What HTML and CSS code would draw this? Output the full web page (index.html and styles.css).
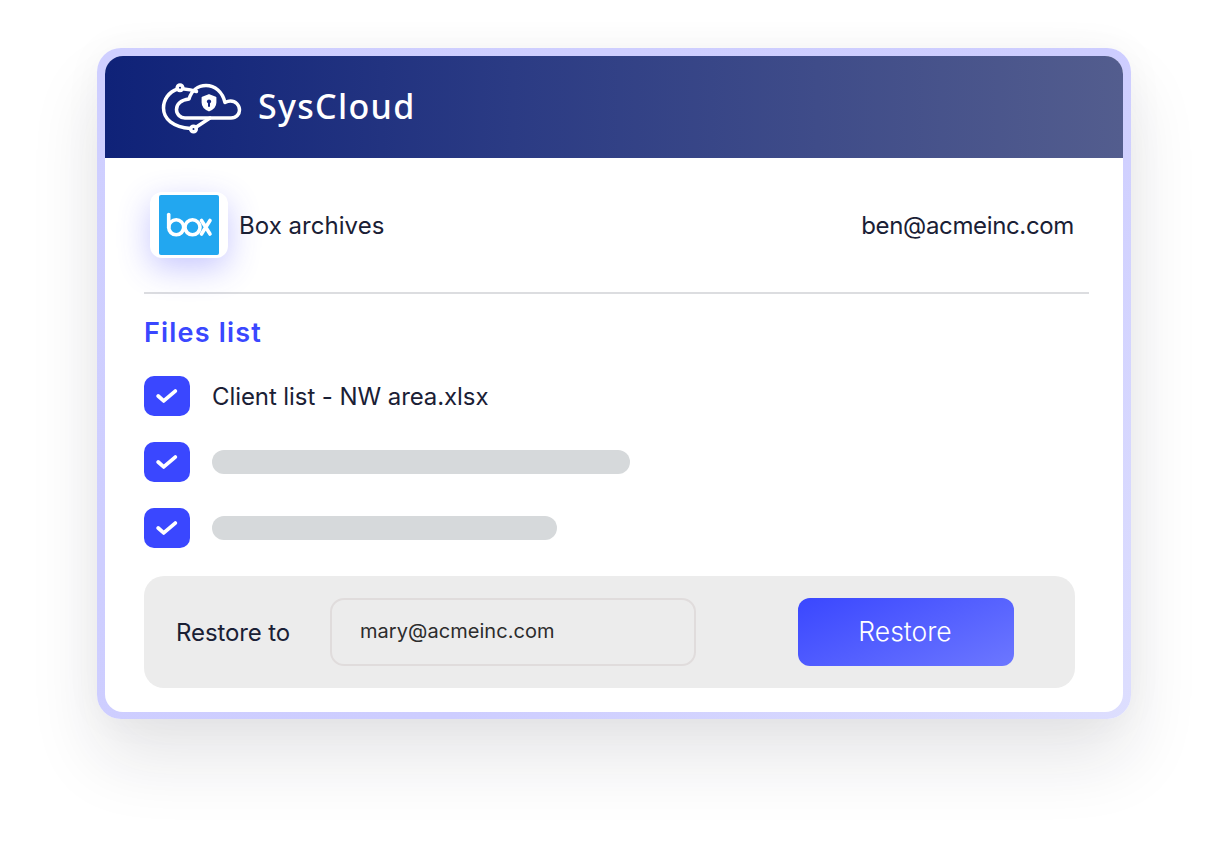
FILE: index.html
```html
<!DOCTYPE html>
<html lang="en">

<head>
  <meta charset="UTF-8">
  <meta name="viewport" content="width=device-width, initial-scale=1.0">
  <title>SysCloud Box archives</title>
  <link rel="stylesheet" href="styles.css">
</head>

<body>

  <div class="card">
    <div class="card-inner">
      <header class="header">
        <svg class="logo" viewBox="0 0 95 65" fill="none" stroke="#fff" stroke-width="3.500" stroke-linecap="round" stroke-linejoin="round">
          <circle cx="25" cy="12.7" r="2.800" />
          <path d="M22.500 14C13.500 17 8.500 25 8.500 33C8.500 44 18 52 35.500 53.500" />
          <circle cx="38.500" cy="54" r="2.800" />
          <path d="M41 52.300L55 43" />
          <path d="M29 14C33 14.300 37 15 41.500 16.500" />
          <path d="M34 24C26 25 21.500 29 21.500 34.500C21.500 39.500 25.500 43 30 43H76C81.500 43 84.500 39 84.500 35C84.500 30 80.500 26 75.500 26C73.500 26 72 26.500 70 27.500C67.500 17 60 10.500 51 10.500C43 10.500 36.500 15.500 34 24Z" />
          <path d="M54 20L60.500 22.500V27.500C60.500 31.500 57.500 34 54 35.500C50.500 34 47.500 31.500 47.500 27.500V22.500Z" stroke-width="1.800" fill="#fff" />
          <circle cx="54" cy="26.500" r="2.100" fill="#152680" stroke="none" />
          <path d="M54 27V31" stroke="#152680" stroke-width="2" />
        </svg>
        <span class="brand">SysCloud</span>
      </header>

      <main class="content">
        <div class="account">
          <div class="account-left">
            <div class="tile">
              <svg class="box-logo" viewBox="0 0 60 60" fill="none" stroke="#fff" stroke-width="3.600" stroke-linecap="round">
                <path d="M9.700 19.500V32.300" />
                <circle cx="17.200" cy="32.300" r="7.500" />
                <circle cx="33.500" cy="32.300" r="7.500" />
                <path d="M42.500 25.500L51 39M51 25.500L42.500 39" />
              </svg>
            </div>
            <span class="account-name">Box archives</span>
          </div>
          <span class="account-email">ben@acmeinc.com</span>
        </div>

        <h2 class="files-title">Files list</h2>

        <ul class="files">
          <li class="file">
            <span class="check">
              <svg viewBox="0 0 20 16" fill="none" stroke="#fff" stroke-width="3.400" stroke-linecap="round" stroke-linejoin="round"><path d="M2 8L7 12.500L17.500 3.500" /></svg>
            </span>
            <span class="file-name">Client list - NW area.xlsx</span>
          </li>
          <li class="file">
            <span class="check">
              <svg viewBox="0 0 20 16" fill="none" stroke="#fff" stroke-width="3.400" stroke-linecap="round" stroke-linejoin="round"><path d="M2 8L7 12.500L17.500 3.500" /></svg>
            </span>
            <span class="bar bar-long"></span>
          </li>
          <li class="file">
            <span class="check">
              <svg viewBox="0 0 20 16" fill="none" stroke="#fff" stroke-width="3.400" stroke-linecap="round" stroke-linejoin="round"><path d="M2 8L7 12.500L17.500 3.500" /></svg>
            </span>
            <span class="bar bar-short"></span>
          </li>
        </ul>

        <form class="restore">
          <label class="restore-label" for="target">Restore to</label>
          <input class="restore-input" id="target" type="text" value="mary@acmeinc.com">
          <button class="restore-btn" type="button">Restore</button>
        </form>
      </main>
    </div>
  </div>

</body>

</html>
```

FILE: styles.css
```css
* {
  box-sizing: border-box;
}

body {
  margin: 0;
  height: 864px;
  overflow: hidden;
  padding: 48px 0 0 97px;
  background: #fff;
  font-family: Inter, "Liberation Sans", sans-serif;
  font-size: 24px;
  font-weight: 400;
  color: #1a2035;
}

.card {
  width: 1034px;
  height: 671px;
  padding: 8px 8px 7px;
  border-radius: 24px;
  background: linear-gradient(135deg, #cfcfff 0%, #cdcdff 60%, #dddefe 100%);
  box-shadow: 0 40px 70px rgba(30, 30, 50, 0.11), 0 0 40px rgba(30, 30, 50, 0.04);
}

.card-inner {
  height: 100%;
  background: #fff;
  border-radius: 18px;
  overflow: hidden;
}

.header {
  height: 102px;
  display: flex;
  align-items: center;
  padding: 0 0 2px 50px;
  background: linear-gradient(90deg, #0f2278 0%, #2b3b84 40%, #535d8e 100%);
}

.logo {
  width: 95px;
  height: 65px;
  flex: none;
  margin-top: 2px;
}

.brand {
  margin-left: 8px;
  font-family: "Noto Sans", sans-serif;
  font-size: 34px;
  font-weight: 500;
  letter-spacing: 1.3px;
  color: #fff;
}

.content {
  padding: 0 34px 0 39px;
}

.account {
  height: 136px;
  display: flex;
  align-items: center;
  justify-content: space-between;
  padding: 0 15px 0 6px;
  border-bottom: 2px solid #dcdde0;
}

.account-left {
  display: flex;
  align-items: center;
  gap: 11px;
}

.account-name {
  padding-top: 1px;
  letter-spacing: 0.04px;
}

.account-email {
  padding-top: 1px;
  letter-spacing: -0.35px;
}

.tile {
  width: 78px;
  height: 66px;
  display: flex;
  align-items: center;
  justify-content: center;
  background: #fff;
  border-radius: 12px;
  box-shadow: 0 10px 32px rgba(70, 70, 255, 0.3);
}

.box-logo {
  width: 60px;
  height: 60px;
  background: #22a7f0;
  border-radius: 2px;
}

.files-title {
  margin: 22px 0 26px;
  font-size: 27px;
  line-height: 34px;
  font-weight: 600;
  letter-spacing: 1.2px;
  color: #3a47ff;
}

.files {
  list-style: none;
  margin: 0;
  padding: 0;
  display: flex;
  flex-direction: column;
  gap: 26px;
}

.file {
  display: flex;
  align-items: center;
  gap: 22px;
  height: 40px;
}

.file-name {
  letter-spacing: -0.08px;
}

.check {
  width: 46px;
  height: 40px;
  display: flex;
  align-items: center;
  justify-content: center;
  background: #3a47ff;
  border-radius: 10px;
}

.check svg {
  width: 22px;
  height: 18px;
}

.bar {
  height: 24px;
  border-radius: 12px;
  background: #d6d9db;
}

.bar-long {
  width: 418px;
}

.bar-short {
  width: 345px;
}

.restore {
  width: 931px;
  height: 112px;
  margin-top: 28px;
  display: flex;
  align-items: center;
  padding-left: 32px;
  background: #ececec;
  border-radius: 20px;
}

.restore-label {
  width: 154px;
  font-size: 24px;
  letter-spacing: -0.1px;
}

.restore-input {
  width: 366px;
  height: 68px;
  padding: 0 28px 2px;
  background: transparent;
  border: 2px solid #e0dcdc;
  border-radius: 14px;
  font-family: inherit;
  font-size: 20px;
  font-weight: 400;
  letter-spacing: 0.05px;
  color: #2c2c2c;
}

.restore-btn {
  width: 216px;
  height: 68px;
  margin-left: 102px;
  padding: 0 2px 3px 0;
  border: 0;
  border-radius: 12px;
  background: linear-gradient(155deg, #3a47ff 0%, #6c77ff 100%);
  font-family: inherit;
  font-size: 26.500px;
  font-weight: 300;
  color: #fff;
}
```
